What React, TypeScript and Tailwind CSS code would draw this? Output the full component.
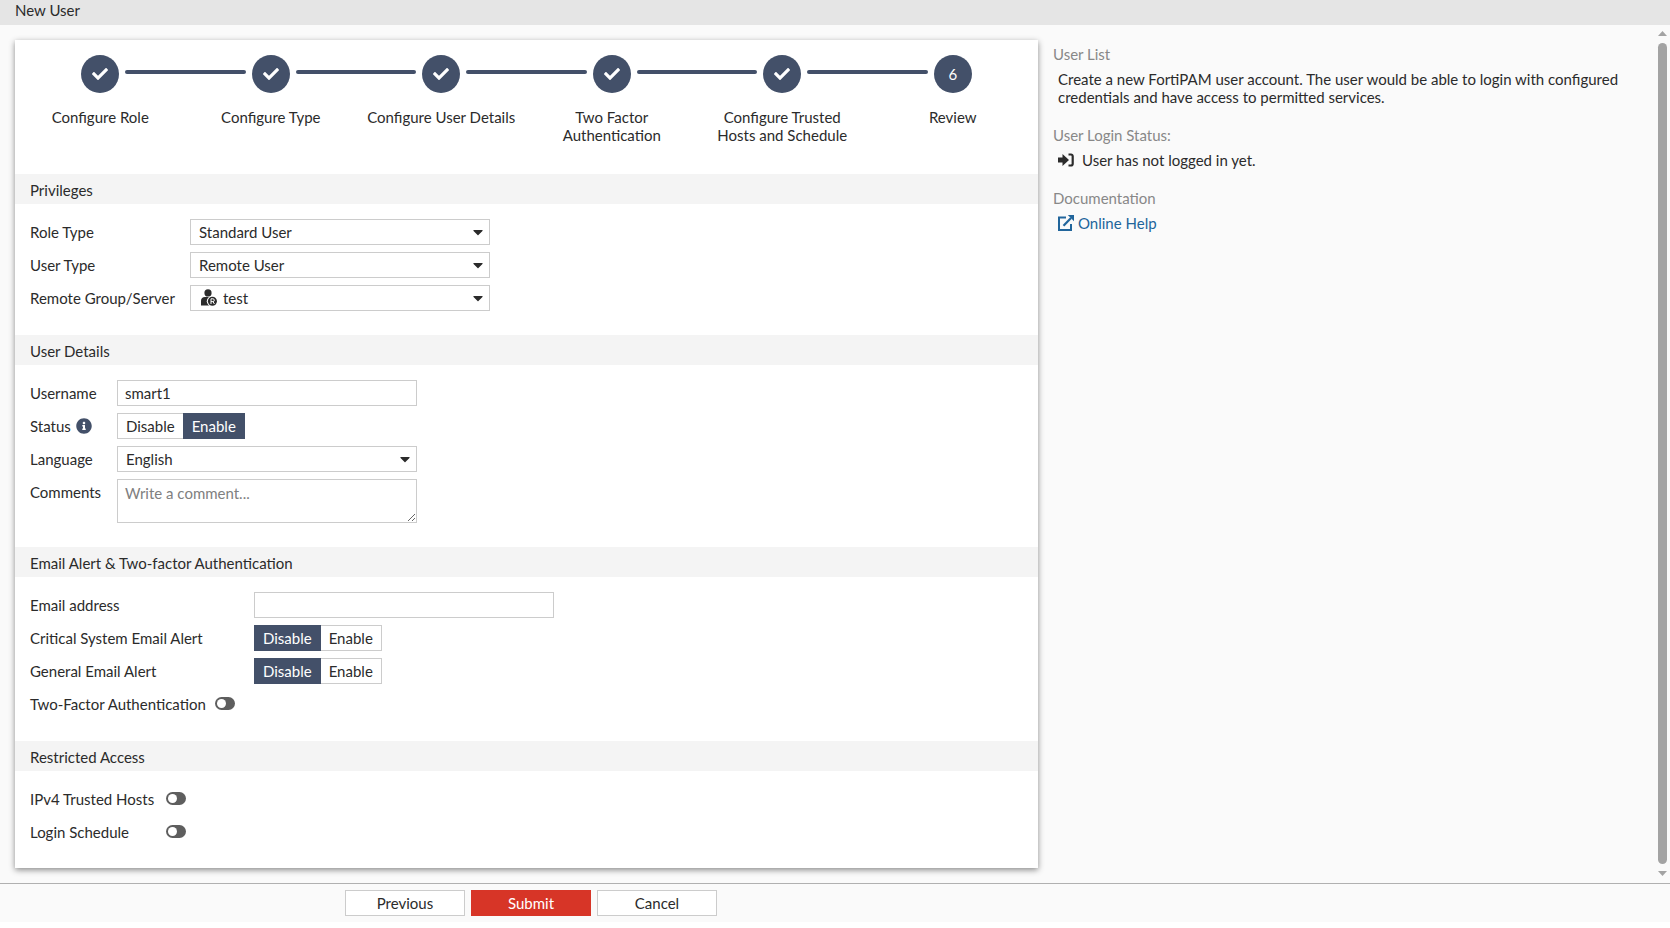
import { useId, useState } from 'react'
import type { ReactNode } from 'react'
import { FaCaretDown, FaCheck, FaInfoCircle } from 'react-icons/fa'

const steps = [
  'Configure Role',
  'Configure Type',
  'Configure User Details',
  'Two Factor Authentication',
  'Configure Trusted Hosts and Schedule',
  'Review',
]

const controlClass =
  'h-[26px] w-[300px] border border-[#ccc] bg-white px-[7px] outline-none'

function Stepper({ current }: { current: number }) {
  return (
    <ol className="grid grid-cols-6 pt-[15px]">
      {steps.map((label, i) => (
        <li key={label} className="flex h-[119px] flex-col items-center gap-[15px]">
          <div className="flex w-full items-center gap-1.5">
            <span className={`mb-1 h-1 flex-1 rounded-r-sm ${i > 0 ? 'bg-[#435069]' : ''}`} />
            <span className="flex size-[38px] items-center justify-center rounded-full bg-[#435069] text-white">
              {i + 1 < current ? <FaCheck className="size-4" /> : i + 1}
            </span>
            <span className={`mb-1 h-1 flex-1 rounded-l-sm ${i < steps.length - 1 ? 'bg-[#435069]' : ''}`} />
          </div>
          <span className="max-w-[152px] text-center">{label}</span>
        </li>
      ))}
    </ol>
  )
}

function Section({ title, children }: { title: string; children: ReactNode }) {
  return (
    <section className="group">
      <h2 className="flex h-[30px] items-center bg-[#f4f4f4] px-[15px] pt-px">{title}</h2>
      <div className="flex flex-col gap-[7px] px-[15px] pt-[15px] pb-6 group-last:pb-[23px]">{children}</div>
    </section>
  )
}

function Row({
  label,
  htmlFor,
  labelWidth,
  extra,
  children,
}: {
  label: string
  htmlFor?: string
  labelWidth: string
  extra?: ReactNode
  children?: ReactNode
}) {
  return (
    <div className="flex min-h-[26px] items-start">
      <div className={`flex h-[26px] items-center gap-[5px] ${labelWidth}`}>
        <label htmlFor={htmlFor} className="whitespace-nowrap">{label}</label>
        {extra}
      </div>
      {children}
    </div>
  )
}

function Select({ id, value, icon }: { id: string; value: string; icon?: ReactNode }) {
  return (
    <div className="relative">
      <select id={id} defaultValue={value} className={`${controlClass} appearance-none ${icon ? 'pl-8' : 'pl-2'}`}>
        <option>{value}</option>
      </select>
      {icon && <span className="pointer-events-none absolute top-1 left-[11px]">{icon}</span>}
      <FaCaretDown className="pointer-events-none absolute top-[5px] right-1 size-4" />
    </div>
  )
}

function Segmented({ label, initial }: { label: string; initial: string }) {
  const [value, setValue] = useState(initial)

  return (
    <div role="group" aria-label={label} className="flex h-[26px]">
      {['Disable', 'Enable'].map((option) => (
        <button
          key={option}
          type="button"
          aria-pressed={value === option}
          onClick={() => setValue(option)}
          className={`border px-2 ${
            value === option
              ? 'border-[#435069] bg-[#435069] text-white'
              : 'border-[#ccc] bg-white first:border-r-0 last:border-l-0'
          }`}
        >
          {option}
        </button>
      ))}
    </div>
  )
}

function Toggle({ id }: { id: string }) {
  return (
    <div className="flex h-[26px] items-center">
      <input
        id={id}
        type="checkbox"
        role="switch"
        className="mb-0.5 h-[13px] w-5 appearance-none rounded-full bg-[#5e5e5e] p-0.5 before:block before:size-[9px] before:rounded-full before:bg-white checked:bg-[#435069] checked:before:ml-[7px]"
      />
    </div>
  )
}

function RemoteUserIcon() {
  return (
    <svg viewBox="0 0 16 17" className="h-[17px] w-4" aria-hidden="true">
      <circle cx="7" cy="3.9" r="3.6" fill="#2b2b2b" />
      <path d="M0 16.500V12c0-2.500 1.500-4 4-4h5.500l1.500 1v7.500z" fill="#2b2b2b" />
      <circle cx="11.200" cy="12.200" r="5.400" fill="#fff" />
      <circle cx="11.400" cy="12.200" r="4.500" fill="#2b2b2b" />
      <path d="M10 15V9.800h1.900a1.400 1.400 0 0 1 0 2.800H10m2 0 1.400 2.400" fill="none" stroke="#fff" />
    </svg>
  )
}

function SignInIcon() {
  return (
    <svg viewBox="0 0 16 14" className="h-[14px] w-4" aria-hidden="true" fill="currentColor">
      <path d="M0 4.500h4.500V.9L11 7l-6.500 6.100V9.500H0z" />
      <path d="M10.500 1.500H13a1.700 1.700 0 0 1 1.700 1.700v7.600a1.700 1.700 0 0 1-1.700 1.700h-2.500" fill="none" stroke="currentColor" strokeWidth="2.200" />
    </svg>
  )
}

function ExternalLinkIcon() {
  return (
    <svg viewBox="0 0 16 16" className="size-4" aria-hidden="true">
      <path d="M8 2.500H1v12.500h12V9" fill="none" stroke="currentColor" strokeWidth="2" />
      <path d="M5.500 10.800 13 3" fill="none" stroke="currentColor" strokeWidth="2.200" />
      <path d="M9.800 0H16v6.200z" fill="currentColor" />
    </svg>
  )
}

function Scrollbar() {
  return (
    <div className="flex w-[15px] shrink-0 flex-col items-center gap-[7px] pt-1.5 pb-[7px]" aria-hidden="true">
      <svg viewBox="0 0 9 5" className="h-[5px] w-[9px]">
        <path d="M0 5 4.500 0 9 5z" fill="#a3a3a3" />
      </svg>
      <span className="w-[9px] flex-1 rounded-full bg-[#a3a3a3]" />
      <svg viewBox="0 0 9 5" className="h-[5px] w-[9px]">
        <path d="M0 0h9L4.500 5z" fill="#a3a3a3" />
      </svg>
    </div>
  )
}

export default function App() {
  const id = useId()

  return (
    <div className="flex h-screen flex-col bg-white pb-1.5 font-['Lato',sans-serif] text-[15px] leading-[18px] text-[#2b2b2b]">
      <header className="h-[25px] shrink-0 bg-[#e5e5e5] px-[15px] pt-px">
        <h1>New User</h1>
      </header>

      <div className="flex min-h-0 flex-1 bg-[#fafafa]">
        <div className="flex min-w-0 flex-1 items-start gap-[15px] overflow-hidden pt-[15px] pl-[15px]">
          <main className="min-w-0 flex-[1023]">
            <form id={`${id}-form`} className="bg-white shadow-[0_2px_6px_rgba(0,0,0,0.45)]">
              <Stepper current={6} />

              <Section title="Privileges">
                <Row label="Role Type" htmlFor={`${id}-role`} labelWidth="w-[160px]">
                  <Select id={`${id}-role`} value="Standard User" />
                </Row>
                <Row label="User Type" htmlFor={`${id}-type`} labelWidth="w-[160px]">
                  <Select id={`${id}-type`} value="Remote User" />
                </Row>
                <Row label="Remote Group/Server" htmlFor={`${id}-group`} labelWidth="w-[160px]">
                  <Select id={`${id}-group`} value="test" icon={<RemoteUserIcon />} />
                </Row>
              </Section>

              <Section title="User Details">
                <Row label="Username" htmlFor={`${id}-name`} labelWidth="w-[87px]">
                  <input id={`${id}-name`} defaultValue="smart1" className={controlClass} />
                </Row>
                <Row label="Status" labelWidth="w-[87px]" extra={<FaInfoCircle className="size-4 text-[#435069]" />}>
                  <Segmented label="Status" initial="Enable" />
                </Row>
                <Row label="Language" htmlFor={`${id}-lang`} labelWidth="w-[87px]">
                  <Select id={`${id}-lang`} value="English" />
                </Row>
                <Row label="Comments" htmlFor={`${id}-comments`} labelWidth="w-[87px]">
                  <textarea
                    id={`${id}-comments`}
                    placeholder="Write a comment..."
                    className="h-11 w-[300px] border border-[#ccc] bg-white px-[7px] py-1 outline-none placeholder:text-[#808080]"
                  />
                </Row>
              </Section>

              <Section title="Email Alert & Two-factor Authentication">
                <Row label="Email address" htmlFor={`${id}-email`} labelWidth="w-[224px]">
                  <input id={`${id}-email`} type="email" className={controlClass} />
                </Row>
                <Row label="Critical System Email Alert" labelWidth="w-[224px]">
                  <Segmented label="Critical System Email Alert" initial="Disable" />
                </Row>
                <Row label="General Email Alert" labelWidth="w-[224px]">
                  <Segmented label="General Email Alert" initial="Disable" />
                </Row>
                <Row label="Two-Factor Authentication" htmlFor={`${id}-tfa`} labelWidth="w-[185px]">
                  <Toggle id={`${id}-tfa`} />
                </Row>
              </Section>

              <Section title="Restricted Access">
                <Row label="IPv4 Trusted Hosts" htmlFor={`${id}-hosts`} labelWidth="w-[136px]">
                  <Toggle id={`${id}-hosts`} />
                </Row>
                <Row label="Login Schedule" htmlFor={`${id}-schedule`} labelWidth="w-[136px]">
                  <Toggle id={`${id}-schedule`} />
                </Row>
              </Section>
            </form>
          </main>

          <aside className="flex min-w-0 flex-[602] flex-col gap-5 pt-[5px]">
            <section>
              <h2 className="text-[#888]">User List</h2>
              <p className="mt-[7px] ml-[5px] max-w-[570px]">
                Create a new FortiPAM user account. The user would be able to login with configured credentials and
                have access to permitted services.
              </p>
            </section>
            <section>
              <h2 className="text-[#888]">User Login Status:</h2>
              <p className="mt-[7px] ml-[5px] flex items-center gap-2">
                <SignInIcon />
                User has not logged in yet.
              </p>
            </section>
            <section>
              <h2 className="text-[#888]">Documentation</h2>
              <a href="#help" className="mt-[7px] ml-[5px] flex items-center gap-1 text-[#21659b]">
                <ExternalLinkIcon />
                Online Help
              </a>
            </section>
          </aside>
        </div>
        <Scrollbar />
      </div>

      <footer className="flex h-[39px] shrink-0 border-t border-[#b0b0b0] bg-[#fafafa] pt-1.5">
        <div className="flex flex-[1062] justify-center gap-1.5">
          <button type="button" className="h-[26px] w-[120px] border border-[#ccc] bg-white">Previous</button>
          <button type="submit" form={`${id}-form`} className="h-[26px] w-[120px] bg-[#d73527] text-white">Submit</button>
          <button type="button" className="h-[26px] w-[120px] border border-[#ccc] bg-white">Cancel</button>
        </div>
        <div className="flex-[608]" />
      </footer>
    </div>
  )
}
